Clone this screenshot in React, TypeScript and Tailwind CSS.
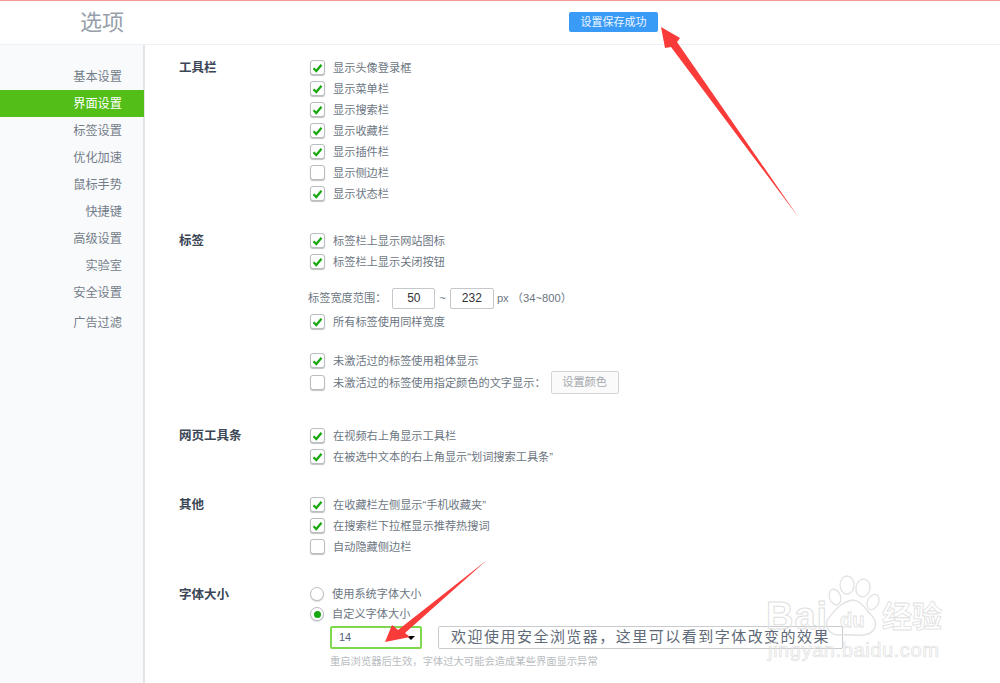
import React from "react";

const FONT = "[font-family:'Liberation_Sans','Noto_Sans_CJK_SC',sans-serif]";

function Check({ on = true, label, extra }: { on?: boolean; label: string; extra?: React.ReactNode }) {
  return (
    <div className="flex items-center h-[21px]">
      <span className="w-[15px] h-[15px] rounded-[3px] border border-[#b9bcc0] bg-white shadow-[0_1px_1px_rgba(0,0,0,0.25)] flex items-center justify-center">
        {on && (
          <svg width="11" height="10" viewBox="0 0 11 10">
            <path d="M1.5 5.2 L4.3 8 L9.5 1.8" fill="none" stroke="#17a70f" strokeWidth="2.2" />
          </svg>
        )}
      </span>
      <span className="ml-[8px] pt-[1px] text-[11.2px] text-[#6c7682] whitespace-nowrap">{label}</span>
      {extra}
    </div>
  );
}

function Radio({ on = false, label }: { on?: boolean; label: string }) {
  return (
    <div className="flex items-center h-[20px]">
      <span className="w-[14px] h-[14px] rounded-full border border-[#b9bcc0] bg-white shadow-[0_1px_1px_rgba(0,0,0,0.15)] flex items-center justify-center">
        {on && <span className="w-[7px] h-[7px] rounded-full bg-[#17a70f]" />}
      </span>
      <span className="ml-[8px] pt-[1px] text-[11.2px] text-[#6c7682] whitespace-nowrap">{label}</span>
    </div>
  );
}

function Section({ title, className, children }: { title: string; className?: string; children: React.ReactNode }) {
  return (
    <section className={`flex ${className ?? ""}`}>
      <h2 className="w-[131px] shrink-0 pt-[1px] text-[12.5px] leading-[21px] font-bold text-[#3a4655]">{title}</h2>
      <div className="flex-1 min-w-0">{children}</div>
    </section>
  );
}

const NAV: [string, string?][] = [
  ["基本设置", "pr-[21px]"],
  ["界面设置", "pr-[22px] bg-[#52be17] text-white -mr-[1px]"],
  ["标签设置", "pr-[21px]"],
  ["优化加速", "pr-[21px]"],
  ["鼠标手势", "pr-[21px]"],
  ["快捷键", "pr-[21px]"],
  ["高级设置", "pr-[21px]"],
  ["实验室", "pr-[21px]"],
  ["安全设置", "pr-[21px]"],
  ["广告过滤", "pr-[21px] mt-[3px]"],
];

export default function App() {
  return (
    <div className={`relative w-[1000px] h-[683px] overflow-hidden bg-white ${FONT}`}>
      <header className="relative h-[45px] border-t border-t-[#f79a96] border-b border-b-[#edf0f4] flex items-center">
        <h1 className="ml-[80px] text-[22px] font-normal text-[#979fab]">选项</h1>
        <div className="absolute left-[569px] top-[11px] w-[89px] h-[20px] rounded-[2px] bg-[#3a9bf7] text-[#eef6ff] text-[11px] flex items-center justify-center">
          设置保存成功
        </div>
      </header>

      <div className="flex h-[638px]">
        <nav className="w-[145px] shrink-0 bg-[#f9fafc] border-r-2 border-r-[#e3e5e8] pt-[18px] text-[12.2px] text-[#737d89]">
          {NAV.map(([t, c]) => (
            <div key={t} className={`flex items-center justify-end h-[27px] pt-[2px] ${c ?? ""}`}>{t}</div>
          ))}
        </nav>

        <main className="flex-1 pl-[34px] pt-[12px]">
          <Section title="工具栏">
            <Check label="显示头像登录框" />
            <Check label="显示菜单栏" />
            <Check label="显示搜索栏" />
            <Check label="显示收藏栏" />
            <Check label="显示插件栏" />
            <Check on={false} label="显示侧边栏" />
            <Check label="显示状态栏" />
          </Section>

          <Section title="标签" className="mt-[26px]">
            <Check label="标签栏上显示网站图标" />
            <Check label="标签栏上显示关闭按钮" />
            <div className="flex items-center h-[22px] mt-[15px] -ml-[2px] text-[11.2px] text-[#6c7682] whitespace-nowrap">
              <span>标签宽度范围：</span>
              <span className="ml-[6px] w-[43px] h-[21px] border border-[#c4c7cb] rounded-[2px] flex items-center justify-center text-[12px] text-[#333]">50</span>
              <span className="mx-[4px]">~</span>
              <span className="w-[44px] h-[21px] border border-[#c4c7cb] rounded-[2px] flex items-center justify-center text-[12px] text-[#333]">232</span>
              <span className="ml-[3px]">px （34~800）</span>
            </div>
            <div className="mt-[2px]"><Check label="所有标签使用同样宽度" /></div>
            <div className="mt-[18px]"><Check label="未激活过的标签使用粗体显示" /></div>
            <div className="mt-[1px]">
              <Check
                on={false}
                label="未激活过的标签使用指定颜色的文字显示："
                extra={
                  <span className="ml-[5px] w-[68px] h-[23px] border border-[#d3d6d9] rounded-[2px] bg-[#fafafa] text-[11.2px] text-[#a4a9af] flex items-center justify-center">
                    设置颜色
                  </span>
                }
              />
            </div>
          </Section>

          <Section title="网页工具条" className="mt-[32px]">
            <Check label="在视频右上角显示工具栏" />
            <Check label="在被选中文本的右上角显示“划词搜索工具条”" />
          </Section>

          <Section title="其他" className="mt-[27px]">
            <Check label="在收藏栏左侧显示“手机收藏夹”" />
            <Check label="在搜索栏下拉框显示推荐热搜词" />
            <Check on={false} label="自动隐藏侧边栏" />
          </Section>

          <Section title="字体大小" className="mt-[27px]">
            <Radio label="使用系统字体大小" />
            <Radio on label="自定义字体大小" />
            <div className="flex items-center mt-[2px] ml-[20px]">
              <div className="w-[92px] h-[23px] border-2 border-[#7fd64f] rounded-[2px] flex items-center justify-between pl-[7px] pr-[3px] text-[11px] text-[#55607a]">
                <span>14</span>
                <span className="w-0 h-0 border-x-[4px] border-x-transparent border-t-[4px] border-t-black mr-[2px]" />
              </div>
              <div className="ml-[16px] w-[405px] h-[23px] border border-[#c9cbce] rounded-[2px] pl-[12px] flex items-center text-[15px] tracking-[1.48px] text-[#5f6a78] whitespace-nowrap">
                欢迎使用安全浏览器，这里可以看到字体改变的效果
              </div>
            </div>
            <p className="mt-[6px] ml-[20px] text-[10.3px] leading-[14px] text-[#b8bcc1] whitespace-nowrap">
              重启浏览器后生效，字体过大可能会造成某些界面显示异常
            </p>
          </Section>
        </main>
      </div>

      {/* red annotation arrows */}
      <svg className="absolute left-0 top-0 pointer-events-none" width="1000" height="683" viewBox="0 0 1000 683">
        <path d="M661 27 L680 38 L677 42 L799 218 L671 47 L665 48 Z" fill="#f93b3a" />
        <path d="M385 642 L392 625 L398 630 L487 560 L405 633 L410 637 Z" fill="#f93b3a" />
      </svg>

      {/* Baidu watermark */}
      <div className="absolute left-[766px] top-[574px] w-[234px] h-[109px] pointer-events-none">
        <svg className="absolute left-0 top-0" width="234" height="109" viewBox="0 0 234 109">
          <g fill="none" stroke="#e2e2e2" strokeWidth="1.3">
            <ellipse cx="81" cy="11" rx="7" ry="9" />
            <ellipse cx="97" cy="14" rx="7" ry="9" transform="rotate(10 97 14)" />
            <ellipse cx="69" cy="23" rx="5.5" ry="8" transform="rotate(-20 69 23)" />
            <ellipse cx="107" cy="28" rx="5.5" ry="8" transform="rotate(25 107 28)" />
            <path d="M87 26 C96 27 100 36 106 42 C113 50 109 60 97 61 C90 62 82 60 73 61 C63 61 58 52 62 45 C67 39 74 28 87 26 Z" />
          </g>
        </svg>
        <span className="absolute left-[0px] top-[20px] text-[38px] leading-[44px] font-bold text-transparent [-webkit-text-stroke:1px_#e0e0e0] [font-family:'Liberation_Sans',sans-serif] tracking-[1px]">Bai</span>
        <span className="absolute left-[74px] top-[34px] text-[20px] leading-[24px] font-bold text-transparent [-webkit-text-stroke:0.8px_#e0e0e0] [font-family:'Liberation_Sans',sans-serif]">du</span>
        <span className="absolute left-[116px] top-[25px] text-[30px] leading-[36px] font-bold text-transparent [-webkit-text-stroke:0.8px_#e0e0e0]">经验</span>
        <span className="absolute left-[2px] top-[64px] text-[20px] leading-[24px] text-transparent [-webkit-text-stroke:0.7px_#e0e0e0] [font-family:'Liberation_Sans',sans-serif] tracking-[0.6px]">jingyan.baidu.com</span>
      </div>
    </div>
  );
}
